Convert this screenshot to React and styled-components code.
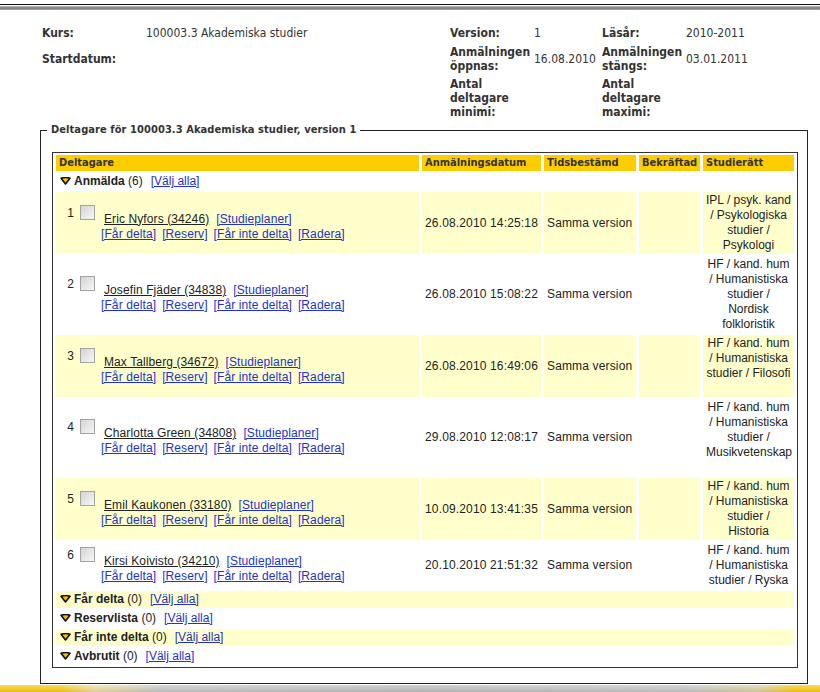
import React from "react";
import styled, { createGlobalStyle } from "styled-components";

const tahoma = `"DejaVu Sans Condensed", "DejaVu Sans", Verdana, sans-serif`;
const arial = `"Liberation Sans", Arial, sans-serif`;

const GlobalStyle = createGlobalStyle`
  html, body {
    margin: 0;
    padding: 0;
    background: #fff;
    overflow: hidden;
  }
  body {
    font-family: ${arial};
    font-size: 12px;
    color: #222;
  }
`;

const Page = styled.div`
  width: 820px;
`;

const TopRule = styled.div`
  margin-top: 4px;
  height: 1px;
  background: #111;
`;

const TopBand = styled.div`
  margin-top: 1px;
  height: 4px;
  background: linear-gradient(#c4c4c4, #7a7a7a 50%, #a8a8a8);
`;

const Info = styled.div`
  display: grid;
  grid-template-columns: 104px 304px 84px 68px 84px 1fr;
  grid-template-rows: 16px auto auto;
  row-gap: 4px;
  align-items: center;
  margin: 15px 0 0 42px;
  font-family: ${tahoma};
  font-size: 12px;
  line-height: 14px;
  color: #333;
`;

const Label = styled.div`
  font-weight: bold;
`;

const Value = styled.div``;

const Box = styled.fieldset`
  margin: 3px 0 0 40px;
  width: 768px;
  box-sizing: border-box;
  min-width: 0;
  border: 1px solid #222;
  padding: 14px 9px 15px 11px;
`;

const Legend = styled.legend`
  margin-left: -5px;
  padding: 0 4px;
  font-family: ${tahoma};
  font-weight: bold;
  font-size: 11px;
  letter-spacing: 0.08px;
  line-height: 16px;
  color: #333;
`;

const Grid = styled.table`
  width: 746px;
  table-layout: fixed;
  border: 1px solid #333;
  border-spacing: 3px 2px;
  font-family: ${arial};
  font-size: 12px;
  color: #222;
`;

const Head = styled.th`
  box-sizing: border-box;
  width: ${(p) => p.$w}px;
  height: 16px;
  padding: 0 3px;
  background: #ffcc00;
  font-family: ${tahoma};
  font-size: 11px;
  font-weight: bold;
  line-height: 16px;
  color: #333;
  text-align: left;
  white-space: nowrap;
  overflow: hidden;
`;

const GroupCell = styled.td`
  padding: 1px 4px;
  line-height: 15px;
  background: ${(p) => (p.$shade ? "#ffffcc" : "#fff")};
  white-space: nowrap;
`;

const GroupTitle = styled.b`
  font-weight: bold;
  margin-left: 3px;
`;

const Cell = styled.td`
  padding: 1px 3px;
  line-height: 15px;
  vertical-align: middle;
  text-align: ${(p) => (p.$center ? "center" : "left")};
  letter-spacing: ${(p) => (p.$center ? "0" : "0.15px")};
  background: ${(p) => (p.$shade ? "#ffffcc" : "#fff")};
  white-space: nowrap;
  overflow: visible;
`;

const Line = styled.div`
  min-height: 15px;
`;

const Who = styled.div`
  display: flex;
  align-items: flex-start;
  letter-spacing: 0.1px;
`;

const Num = styled.span`
  width: 14px;
  text-align: right;
  line-height: 15px;
  padding: 1px 0 0 1px;
`;

const Check = styled.input.attrs({ type: "checkbox" })`
  appearance: none;
  margin: 0 0 0 6px;
  width: 15px;
  height: 15px;
  box-sizing: border-box;
  border: 1px solid #a3a3a3;
  background: linear-gradient(135deg, #d4d4d4, #f7f7f7);
`;

const Names = styled.div`
  margin: 7px 0 0 6px;
  line-height: 15px;
`;

const NameLine = styled.div`
  padding-left: 3px;
  display: flex;
  gap: 7px;
`;

const Name = styled.a`
  color: #222;
  text-decoration: underline;
`;

const Link = styled.a`
  color: #2233cc;
  text-decoration: underline;
`;

const Actions = styled.div`
  display: flex;
  gap: 6px;
`;

const BottomBand = styled.div`
  margin-top: 1px;
  height: 8px;
  background:
    linear-gradient(rgba(255, 255, 255, 0.35), rgba(0, 0, 0, 0.08)),
    linear-gradient(
      to right,
      #f8c800 0,
      #f8c800 60px,
      #ecdc98 95px,
      #c4c4c4 160px,
      #bababa 420px,
      #c4c4c4 690px,
      #d8cf9a 760px,
      #f8c800 795px,
      #f8c800 100%
    );
`;

const Arrow = () => (
  <svg width="11" height="8" viewBox="0 0 11 8" style={{ verticalAlign: "0px" }}>
    <path
      d="M1 1.3 Q5.5 -0.2 10 1.3 L5.5 7 Z"
      fill="#f2bc00"
      stroke="#111"
      strokeWidth="1.6"
      strokeLinejoin="round"
    />
  </svg>
);

const people = [
  {
    name: "Eric Nyfors (34246)",
    date: "26.08.2010 14:25:18",
    rights: ["IPL / psyk. kand", "/ Psykologiska", "studier /", "Psykologi"],
  },
  {
    name: "Josefin Fjäder (34838)",
    date: "26.08.2010 15:08:22",
    rights: ["HF / kand. hum", "/ Humanistiska", "studier /", "Nordisk", "folkloristik"],
  },
  {
    name: "Max Tallberg (34672)",
    date: "26.08.2010 16:49:06",
    rights: ["HF / kand. hum", "/ Humanistiska", "studier / Filosofi", ""],
  },
  {
    name: "Charlotta Green (34808)",
    date: "29.08.2010 12:08:17",
    rights: ["HF / kand. hum", "/ Humanistiska", "studier /", "Musikvetenskap", ""],
  },
  {
    name: "Emil Kaukonen (33180)",
    date: "10.09.2010 13:41:35",
    rights: ["HF / kand. hum", "/ Humanistiska", "studier /", "Historia"],
  },
  {
    name: "Kirsi Koivisto (34210)",
    date: "20.10.2010 21:51:32",
    rights: ["HF / kand. hum", "/ Humanistiska", "studier / Ryska"],
  },
];

const groups = [
  { title: "Får delta", shade: true },
  { title: "Reservlista", shade: false },
  { title: "Får inte delta", shade: true },
  { title: "Avbrutit", shade: false },
];

const GroupRow = ({ title, count, shade }) => (
  <tr>
    <GroupCell colSpan={5} $shade={shade}>
      <Arrow />
      <GroupTitle>{title}</GroupTitle> ({count})
      <Link href="#" style={{ marginLeft: 8 }}>[Välj alla]</Link>
    </GroupCell>
  </tr>
);

export default function App() {
  return (
    <Page>
      <GlobalStyle />
      <TopRule />
      <TopBand />

      <Info>
        <Label>Kurs:</Label>
        <Value>100003.3 Akademiska studier</Value>
        <Label>Version:</Label>
        <Value>1</Value>
        <Label>Läsår:</Label>
        <Value>2010-2011</Value>

        <Label>Startdatum:</Label>
        <Value />
        <Label>Anmälningen öppnas:</Label>
        <Value>16.08.2010</Value>
        <Label>Anmälningen stängs:</Label>
        <Value>03.01.2011</Value>

        <Value />
        <Value />
        <Label>Antal deltagare minimi:</Label>
        <Value />
        <Label>Antal deltagare maximi:</Label>
        <Value />
      </Info>

      <Box>
        <Legend>Deltagare för 100003.3 Akademiska studier, version 1</Legend>
        <Grid>
          <thead>
            <tr>
              <Head $w={363}>Deltagare</Head>
              <Head $w={119}>Anmälningsdatum</Head>
              <Head $w={92}>Tidsbestämd</Head>
              <Head $w={61}>Bekräftad</Head>
              <Head $w={91}>Studierätt</Head>
            </tr>
          </thead>
          <tbody>
            <GroupRow title="Anmälda" count={6} shade={false} />
            {people.map((p, i) => {
              const shade = i % 2 === 0;
              return (
                <tr key={p.name}>
                  <Cell $shade={shade}>
                    <Who>
                      <Num>{i + 1}</Num>
                      <Check />
                      <Names>
                        <NameLine>
                          <Name href="#">{p.name}</Name>
                          <Link href="#">[Studieplaner]</Link>
                        </NameLine>
                        <Actions>
                          <Link href="#">[Får delta]</Link>
                          <Link href="#">[Reserv]</Link>
                          <Link href="#">[Får inte delta]</Link>
                          <Link href="#">[Radera]</Link>
                        </Actions>
                      </Names>
                    </Who>
                  </Cell>
                  <Cell $shade={shade}>{p.date}</Cell>
                  <Cell $shade={shade}>Samma version</Cell>
                  <Cell $shade={shade} />
                  <Cell $shade={shade} $center>
                    {p.rights.map((line, k) => (
                      <Line key={k}>{line}</Line>
                    ))}
                  </Cell>
                </tr>
              );
            })}
            {groups.map((g) => (
              <GroupRow key={g.title} title={g.title} count={0} shade={g.shade} />
            ))}
          </tbody>
        </Grid>
      </Box>

      <BottomBand />
    </Page>
  );
}
